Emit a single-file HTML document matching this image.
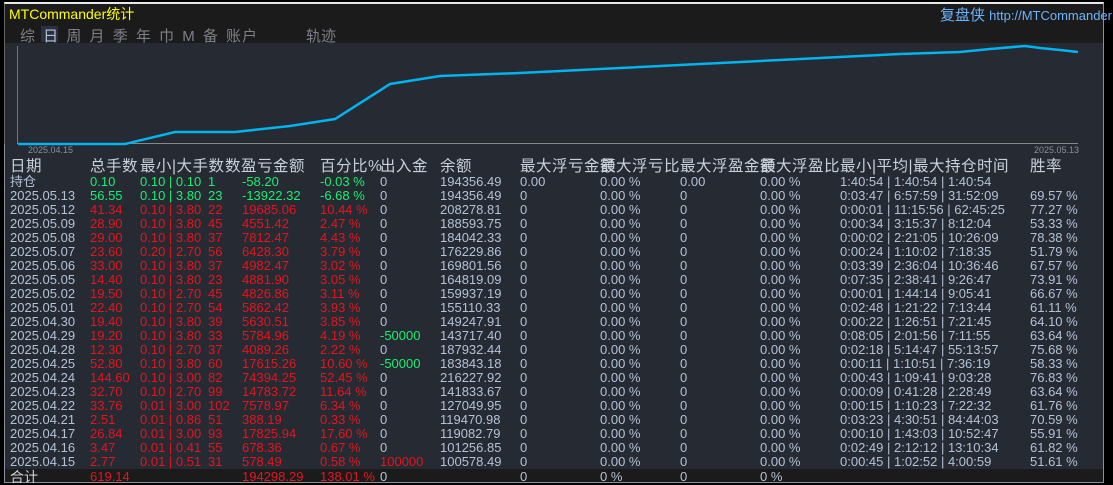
<!DOCTYPE html><html><head><meta charset="utf-8"><style>
*{margin:0;padding:0}
body{width:1113px;height:485px;background:#000;overflow:hidden;position:relative;font-family:"Liberation Sans","Noto Sans CJK SC",sans-serif}
#p{position:absolute;left:4px;top:2px;width:1100px;height:481px;background:#252a33;border-left:1px solid #8a9099;border-top:2px solid #e8e8e8;border-right:1px solid #8a9099;border-bottom:1px solid #8a9099;box-sizing:border-box}
#hd{position:absolute;left:5px;top:4px;width:1098px;height:39px;background:#1b1b1b}
.a{position:absolute;white-space:nowrap}
.r{position:absolute;left:0;width:1113px;height:14px;font-size:13px;line-height:14px;color:#b4c2d8}
.r span{position:absolute;white-space:nowrap}
.g{color:#18f070}.d{color:#e8141c}
.h{font-size:15.5px;color:#c8d0dc;letter-spacing:0.5px}
</style></head><body>
<div id="p"></div><div id="hd"></div>
<div class="a" style="left:5px;top:469px;width:1098px;height:13px;background:#1b1b1b"></div>
<div class="a" style="left:0;top:4px;width:4px;height:140px;border-right:1px solid #666"></div>
<div class="a" style="left:9px;top:4px;font-size:14px;color:#ffff00">MTCommander统计</div>
<div class="a" style="left:940px;top:4px;font-size:15px;color:#6ab4ff">复盘侠 <span style="font-size:13px">http://MTCommander</span></div>
<div class="a" style="left:41px;top:26px;width:17px;height:16px;background:#2a3140"></div>
<div class="a" style="left:20px;top:25px;font-size:15px;color:#7c8088;letter-spacing:1px;word-spacing:2px">综 <span style="color:#b8c0d0">日</span> 周 月 季 年 巾 M 备 账户</div>
<div class="a" style="left:306px;top:25px;font-size:15px;color:#7c8088">轨迹</div>
<svg class="a" style="left:0;top:0" width="1113" height="160">
<line x1="17.5" y1="46" x2="17.5" y2="144" stroke="#777" stroke-width="1"/>
<line x1="17" y1="143.5" x2="1078" y2="143.5" stroke="#888" stroke-width="1"/>
<polyline fill="none" stroke="#00b4f0" stroke-width="2.5" points="18,144 125,144 175,132 235,132 290,126 335,119 390,84 440,76 520,73 600,69 700,64 800,59 900,54 960,52 990,49 1025,46 1040,48 1060,50 1078,52"/>
<text x="28" y="153" font-size="9" fill="#8a8f98" font-family="Liberation Sans">2025.04.15</text>
<text x="1034" y="153" font-size="9" fill="#8a8f98" font-family="Liberation Sans">2025.05.13</text>
</svg>
<div class="r h" style="top:160px"><span style="left:10px">日期</span><span style="left:90px">总手数</span><span style="left:140px">最小|大手数</span><span style="left:225px">数盈亏金额</span><span style="left:320px">百分比%</span><span style="left:380px">出入金</span><span style="left:440px">余额</span><span style="left:520px">最大浮亏金额</span><span style="left:600px">最大浮亏比</span><span style="left:680px">最大浮盈金额</span><span style="left:760px">最大浮盈比</span><span style="left:840px">最小|平均|最大持仓时间</span><span style="left:1030px">胜率</span></div>
<div id="rows"></div>
<script>
var D=[["持仓","0.10","0.10 | 0.10","1","-58.20","-0.03 %","0","194356.49","0.00","0.00 %","0.00","0.00 %","1:40:54 | 1:40:54 | 1:40:54","","g"],
["2025.05.13","56.55","0.10 | 3.80","23","-13922.32","-6.68 %","0","194356.49","0","0.00 %","0","0.00 %","0:03:47 | 6:57:59 | 31:52:09","69.57 %","g"],
["2025.05.12","41.34","0.10 | 3.80","22","19685.06","10.44 %","0","208278.81","0","0.00 %","0","0.00 %","0:00:01 | 11:15:56 | 62:45:25","77.27 %","d"],
["2025.05.09","28.90","0.10 | 3.80","45","4551.42","2.47 %","0","188593.75","0","0.00 %","0","0.00 %","0:00:34 | 3:15:37 | 8:12:04","53.33 %","d"],
["2025.05.08","29.00","0.10 | 3.80","37","7812.47","4.43 %","0","184042.33","0","0.00 %","0","0.00 %","0:00:02 | 2:21:05 | 10:26:09","78.38 %","d"],
["2025.05.07","23.60","0.20 | 2.70","56","6428.30","3.79 %","0","176229.86","0","0.00 %","0","0.00 %","0:00:24 | 1:10:02 | 7:18:35","51.79 %","d"],
["2025.05.06","33.00","0.10 | 3.80","37","4982.47","3.02 %","0","169801.56","0","0.00 %","0","0.00 %","0:03:39 | 2:36:04 | 10:36:46","67.57 %","d"],
["2025.05.05","14.40","0.10 | 3.80","23","4881.90","3.05 %","0","164819.09","0","0.00 %","0","0.00 %","0:07:35 | 2:38:41 | 9:26:47","73.91 %","d"],
["2025.05.02","19.50","0.10 | 2.70","45","4826.86","3.11 %","0","159937.19","0","0.00 %","0","0.00 %","0:00:01 | 1:44:14 | 9:05:41","66.67 %","d"],
["2025.05.01","22.40","0.10 | 2.70","54","5862.42","3.93 %","0","155110.33","0","0.00 %","0","0.00 %","0:02:48 | 1:21:22 | 7:13:44","61.11 %","d"],
["2025.04.30","19.40","0.10 | 3.80","39","5630.51","3.85 %","0","149247.91","0","0.00 %","0","0.00 %","0:00:22 | 1:26:51 | 7:21:45","64.10 %","d"],
["2025.04.29","19.20","0.10 | 3.80","33","5784.96","4.19 %","-50000","143717.40","0","0.00 %","0","0.00 %","0:08:05 | 2:01:56 | 7:11:55","63.64 %","d"],
["2025.04.28","12.30","0.10 | 2.70","37","4089.26","2.22 %","0","187932.44","0","0.00 %","0","0.00 %","0:02:18 | 5:14:47 | 55:13:57","75.68 %","d"],
["2025.04.25","52.80","0.10 | 3.80","60","17615.26","10.60 %","-50000","183843.18","0","0.00 %","0","0.00 %","0:00:11 | 1:10:51 | 7:36:19","58.33 %","d"],
["2025.04.24","144.60","0.10 | 3.00","82","74394.25","52.45 %","0","216227.92","0","0.00 %","0","0.00 %","0:00:43 | 1:09:41 | 9:03:28","76.83 %","d"],
["2025.04.23","32.70","0.10 | 2.70","99","14783.72","11.64 %","0","141833.67","0","0.00 %","0","0.00 %","0:00:09 | 0:41:28 | 2:28:49","63.64 %","d"],
["2025.04.22","33.76","0.01 | 3.00","102","7578.97","6.34 %","0","127049.95","0","0.00 %","0","0.00 %","0:00:15 | 1:10:23 | 7:22:32","61.76 %","d"],
["2025.04.21","2.51","0.01 | 0.86","51","388.19","0.33 %","0","119470.98","0","0.00 %","0","0.00 %","0:03:23 | 4:30:51 | 84:44:03","70.59 %","d"],
["2025.04.17","26.84","0.01 | 3.00","93","17825.94","17.60 %","0","119082.79","0","0.00 %","0","0.00 %","0:00:10 | 1:43:03 | 10:52:47","55.91 %","d"],
["2025.04.16","3.47","0.01 | 0.41","55","678.36","0.67 %","0","101256.85","0","0.00 %","0","0.00 %","0:02:49 | 2:12:12 | 13:10:34","61.82 %","d"],
["2025.04.15","2.77","0.01 | 0.51","31","578.49","0.58 %","100000","100578.49","0","0.00 %","0","0.00 %","0:00:45 | 1:02:52 | 4:00:59","51.61 %","d"],
["合计","619.14","","","194298.29","138.01 %","0","","0","0 %","0","0 %","","","d"]];
var X=[10,90,140,208,242,320,380,440,520,600,680,760,840,1030];
var h="";D.forEach(function(r,i){var t=175+i*14;if(i==21)t=470;h+='<div class="r" style="top:'+t+'px">';
r.slice(0,14).forEach(function(v,j){var c="";if(j>=1&&j<=5)c=r[14];if(j==6&&v!="0")c=v[0]=="-"?"g":"d";if(i==21&&j==0)v='<span style="position:static;font-size:14px;color:#c8d0dc">'+v+'</span>';
h+='<span class="'+c+'" style="left:'+X[j]+'px">'+v+'</span>';});h+='</div>';});
document.getElementById("rows").outerHTML=h;
</script>
</body></html>
